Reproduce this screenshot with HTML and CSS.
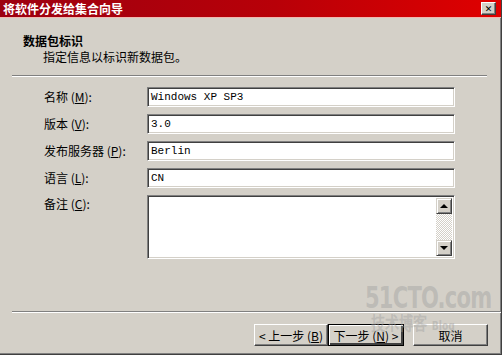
FILE: index.html
```html
<!DOCTYPE html>
<html lang="zh-CN">
<head>
  <meta charset="UTF-8">
  <title>将软件分发给集合向导</title>
  <link rel="stylesheet" href="styles.css">
</head>
<body>
  <div class="window">
    <div class="titlebar">
      <span class="title">将软件分发给集合向导</span>
      <button class="close">&#x2715;</button>
    </div>

    <div class="header">
      <div class="header-title">数据包标识</div>
      <div class="header-sub">指定信息以标识新数据包。</div>
    </div>
    <div class="rule rule-top"></div>

    <div class="form">
      <label>名称 (<u>M</u>):</label>
      <div class="field">Windows XP SP3</div>
      <label>版本 (<u>V</u>):</label>
      <div class="field">3.0</div>
      <label>发布服务器 (<u>P</u>):</label>
      <div class="field">Berlin</div>
      <label>语言 (<u>L</u>):</label>
      <div class="field">CN</div>
      <label class="top">备注 (<u>C</u>):</label>
      <div class="field memo">
        <div class="memo-text"></div>
        <div class="scrollbar">
          <div class="arrow up"><span></span></div>
          <div class="track"></div>
          <div class="arrow down"><span></span></div>
        </div>
      </div>
    </div>

    <div class="spacer"></div>
    <div class="rule rule-bottom"></div>

    <div class="buttons">
      <button class="btn">&lt; 上一步 (<u>B</u>)</button>
      <button class="btn default">下一步 (<u>N</u>) &gt;</button>
      <button class="btn cancel">取消</button>
    </div>

    <div class="watermark">
      <div class="wm-big">51CTO.com</div>
      <div class="wm-small">技术博客 <span>Blog</span></div>
    </div>
  </div>
</body>
</html>
```

FILE: styles.css
```css
* {
  box-sizing: border-box;
  margin: 0;
  padding: 0;
}

body {
  width: 502px;
  height: 355px;
  overflow: hidden;
  background-color: #d4d0c8;
  font-family: "Noto Sans CJK SC", "DejaVu Sans", sans-serif;
  font-size: 12px;
  color: #000;
}

.window {
  position: relative;
  width: 502px;
  height: 355px;
  display: flex;
  flex-direction: column;
  border-right: 1px solid #404040;
  border-bottom: 1px solid #404040;
  box-shadow: inset -1px -1px #808080;
}

.titlebar {
  height: 18px;
  background: linear-gradient(to right, #9c0010, #b80008 55%, #e00000);
  border-bottom: 1px solid #f0b8b0;
  display: flex;
  align-items: center;
  justify-content: space-between;
  padding: 0 5px 0 3px;
}

.title {
  color: #fff;
  font-weight: bold;
  font-size: 12px;
  line-height: 14px;
}

.close {
  width: 15px;
  height: 13px;
  background: #d4d0c8;
  border: 1px solid;
  border-color: #fff #404040 #404040 #fff;
  box-shadow: inset -1px -1px #808080;
  font-size: 9px;
  font-weight: bold;
  line-height: 10px;
  color: #000;
  font-family: "DejaVu Sans", sans-serif;
}

.header {
  padding: 15px 0 0 23px;
  height: 57px;
}

.header-title {
  font-weight: bold;
  line-height: 16px;
}

.header-sub {
  padding-left: 20px;
  line-height: 16px;
}

.rule {
  height: 2px;
  border-top: 1px solid #808080;
  border-bottom: 1px solid #fff;
}

.rule-top {
  margin: 0 14px 0 12px;
}

.rule-bottom {
  margin: 0 0 0 12px;
}

.form {
  display: grid;
  grid-template-columns: 103px 308px;
  grid-auto-rows: 20px;
  row-gap: 7px;
  padding: 10px 0 0 44px;
}

.form label {
  display: flex;
  align-items: center;
  line-height: 14px;
}

.form label.top {
  align-items: flex-start;
  padding-top: 2px;
}

.field {
  height: 20px;
  background: #fff;
  border: 1px solid;
  border-color: #808080 #fff #fff #808080;
  box-shadow: inset 1px 1px #404040, inset -1px -1px #d4d0c8;
  padding: 0 3px;
  font-family: "Liberation Mono", monospace;
  font-size: 11px;
  line-height: 18px;
}

.memo {
  grid-row: span 3;
  height: 64px;
  display: flex;
  padding: 2px 2px 2px 0;
}

.memo-text {
  flex: 1;
}

.scrollbar {
  width: 16px;
  display: flex;
  flex-direction: column;
}

.track {
  flex: 1;
  background-color: #fff;
  background-image:
    linear-gradient(45deg, #d4d0c8 25%, transparent 25%, transparent 75%, #d4d0c8 75%),
    linear-gradient(45deg, #d4d0c8 25%, transparent 25%, transparent 75%, #d4d0c8 75%);
  background-size: 2px 2px;
  background-position: 0 0, 1px 1px;
}

.arrow {
  height: 16px;
  background: #d4d0c8;
  border: 1px solid;
  border-color: #d4d0c8 #404040 #404040 #d4d0c8;
  box-shadow: inset 1px 1px #fff, inset -1px -1px #808080;
  display: flex;
  align-items: center;
  justify-content: center;
}

.arrow span {
  width: 0;
  height: 0;
  border-left: 4px solid transparent;
  border-right: 4px solid transparent;
}

.arrow.up span {
  border-bottom: 4px solid #000;
}

.arrow.down span {
  border-top: 4px solid #000;
}

.spacer {
  flex: 1;
}

.buttons {
  display: flex;
  padding: 11px 12px 0 254px;
  height: 41px;
}

.btn {
  height: 22px;
  width: 74px;
  background: #d4d0c8;
  border: 1px solid;
  border-color: #fff #404040 #404040 #fff;
  box-shadow: inset -1px -1px #808080;
  font-family: "Noto Sans CJK SC", "DejaVu Sans", sans-serif;
  font-size: 12px;
  color: #000;
}

.btn.default {
  width: 76px;
  border: 1px solid #000;
  box-shadow: inset 1px 1px #fff, inset -2px -2px #404040, inset -1px -1px #808080;
}

.btn.cancel {
  margin-left: 9px;
  width: 75px;
}

.watermark {
  position: absolute;
  left: 365px;
  top: 282px;
  width: 160px;
  color: rgba(160, 160, 160, 0.45);
  font-family: "DejaVu Sans Condensed", "DejaVu Sans", sans-serif;
  font-weight: bold;
  pointer-events: none;
  transform: scaleX(0.78);
  transform-origin: left top;
}

.wm-big {
  font-size: 30px;
  line-height: 32px;
  letter-spacing: -1px;
}

.wm-small {
  padding-left: 8px;
  font-size: 18px;
  line-height: 20px;
}

.wm-small span {
  font-size: 13px;
}
```
